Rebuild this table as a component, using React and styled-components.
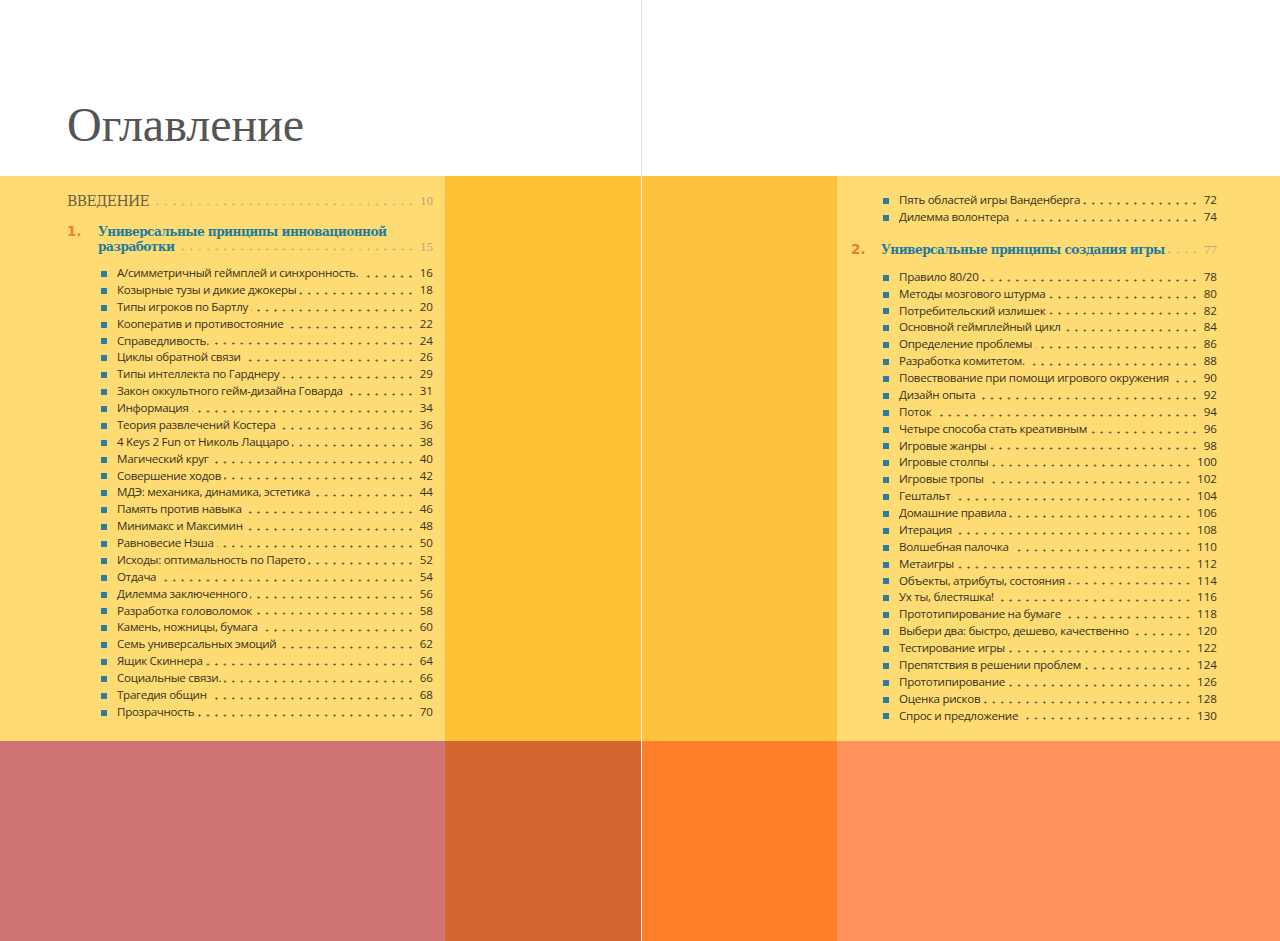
import React from 'react';
import styled, { createGlobalStyle } from 'styled-components';

const GlobalStyle = createGlobalStyle`
  html, body {
    margin: 0;
    padding: 0;
    background: #ffffff;
    overflow: hidden;
  }
  * { box-sizing: border-box; }
`;

const LIGHT = '#FFDB74';

const leftItems = [
  ['А/симметричный геймплей и синхронность.', '16'],
  ['Козырные тузы и дикие джокеры', '18'],
  ['Типы игроков по Бартлу', '20'],
  ['Кооператив и противостояние', '22'],
  ['Справедливость.', '24'],
  ['Циклы обратной связи', '26'],
  ['Типы интеллекта по Гарднеру', '29'],
  ['Закон оккультного гейм-дизайна Говарда', '31'],
  ['Информация', '34'],
  ['Теория развлечений Костера', '36'],
  ['4 Keys 2 Fun от Николь Лаццаро', '38'],
  ['Магический круг', '40'],
  ['Совершение ходов', '42'],
  ['МДЭ: механика, динамика, эстетика', '44'],
  ['Память против навыка', '46'],
  ['Минимакс и Максимин', '48'],
  ['Равновесие Нэша', '50'],
  ['Исходы: оптимальность по Парето', '52'],
  ['Отдача', '54'],
  ['Дилемма заключенного', '56'],
  ['Разработка головоломок', '58'],
  ['Камень, ножницы, бумага', '60'],
  ['Семь универсальных эмоций', '62'],
  ['Ящик Скиннера', '64'],
  ['Социальные связи.', '66'],
  ['Трагедия общин', '68'],
  ['Прозрачность', '70'],
];

const rightTop = [
  ['Пять областей игры Ванденберга', '72'],
  ['Дилемма волонтера', '74'],
];

const rightItems = [
  ['Правило 80/20', '78'],
  ['Методы мозгового штурма', '80'],
  ['Потребительский излишек', '82'],
  ['Основной геймплейный цикл', '84'],
  ['Определение проблемы', '86'],
  ['Разработка комитетом.', '88'],
  ['Повествование при помощи игрового окружения', '90'],
  ['Дизайн опыта', '92'],
  ['Поток', '94'],
  ['Четыре способа стать креативным', '96'],
  ['Игровые жанры', '98'],
  ['Игровые столпы', '100'],
  ['Игровые тропы', '102'],
  ['Гештальт', '104'],
  ['Домашние правила', '106'],
  ['Итерация', '108'],
  ['Волшебная палочка', '110'],
  ['Метаигры', '112'],
  ['Объекты, атрибуты, состояния', '114'],
  ['Ух ты, блестяшка!', '116'],
  ['Прототипирование на бумаге', '118'],
  ['Выбери два: быстро, дешево, качественно', '120'],
  ['Тестирование игры', '122'],
  ['Препятствия в решении проблем', '124'],
  ['Прототипирование', '126'],
  ['Оценка рисков', '128'],
  ['Спрос и предложение', '130'],
];

const Spread = styled.div`
  display: grid;
  grid-template-columns: 641px 1px 638px;
  width: 1280px;
  height: 941px;
  background: #ffffff;
`;

const Divider = styled.div`
  background: linear-gradient(#dedede 0 176px, rgba(255, 255, 255, 0.55) 176px);
`;

const Page = styled.div`
  display: grid;
  grid-template-rows: 176px 565px 200px;
  grid-template-columns: ${(p) => p.$cols};
`;

const Header = styled.div`
  grid-column: 1 / -1;
  padding: 101px 0 0 67px;
`;

const PageTitle = styled.h1`
  margin: 0;
  font-family: 'Liberation Serif', serif;
  font-weight: 400;
  font-size: 48px;
  line-height: 1;
  color: #555555;
`;

const Block = styled.div`
  background: ${(p) => p.$bg};
`;

const Contents = styled.div`
  background: ${LIGHT};
  padding: ${(p) => p.$pad};
  display: flex;
  flex-direction: column;
`;

const Row = styled.div`
  display: flex;
  align-items: flex-end;
`;

const Leader = styled.div`
  flex: 1;
  min-width: 0;
  background-image: radial-gradient(circle, ${(p) => p.$dot} 0 0.85px, transparent 1.3px);
  background-size: 8.45px 3px;
  background-repeat: repeat-x;
  background-position: right 2px bottom ${(p) => p.$dotY}px;
`;

const Label = styled.span`
  background: ${LIGHT};
  padding-right: 3px;
`;

const PageNum = styled.span`
  flex: none;
  margin-left: 3px;
  color: ${(p) => p.$color};
`;

const Intro = styled(Row)`
  font-family: 'DejaVu Serif', serif;
  font-size: 14px;
  line-height: 20px;
  color: #6e5f45;
  letter-spacing: -0.6px;
`;

const IntroNum = styled(PageNum)`
  font-family: 'Liberation Serif', serif;
  font-size: 13px;
  letter-spacing: 0;
  font-weight: 400;
`;

const Section = styled.div`
  display: flex;
  margin-top: ${(p) => p.$top}px;
`;

const SectionNum = styled.div`
  flex: none;
  width: ${(p) => p.$w}px;
  font-family: 'DejaVu Sans', sans-serif;
  font-weight: 700;
  font-size: 13.5px;
  line-height: 15px;
  color: #F47A2C;
`;

const SectionTitle = styled(Row)`
  flex: 1;
  font-family: 'DejaVu Serif Condensed', 'DejaVu Serif', serif;
  font-stretch: condensed;
  font-weight: 700;
  font-size: 13.5px;
  line-height: 15px;
  letter-spacing: -0.55px;
  color: #1E7C9C;
`;

const List = styled.ul`
  list-style: none;
  margin: ${(p) => p.$top}px 0 0;
  padding: 0 0 0 ${(p) => p.$indent}px;
`;

const Item = styled.li`
  display: flex;
  align-items: flex-end;
  height: 16.88px;
  font-family: 'Open Sans', sans-serif;
  font-size: 11.6px;
  line-height: 16.88px;
  letter-spacing: -0.3px;
  color: #37321f;
`;

const Bullet = styled.span`
  flex: none;
  width: 6px;
  height: 6px;
  margin: 0 10px 5px 0;
  background: #2D7B9F;
`;

const ItemNum = styled(PageNum)`
  letter-spacing: 0;
`;

const Entries = ({ items, top, indent }) => (
  <List $top={top} $indent={indent}>
    {items.map(([title, page]) => (
      <Item key={title}>
        <Bullet />
        <Leader $dot="#5f573f" $dotY={4}>
          <Label>{title}</Label>
        </Leader>
        <ItemNum $color="#37321f">{page}</ItemNum>
      </Item>
    ))}
  </List>
);

const Heading = ({ num, title, page, top, numW }) => (
  <Section $top={top}>
    <SectionNum $w={numW}>{num}</SectionNum>
    <SectionTitle>
      <Leader $dot="#c9b479" $dotY={3}>
        <Label>{title}</Label>
      </Leader>
      <IntroNum $color="#bba97c">{page}</IntroNum>
    </SectionTitle>
  </Section>
);

const App = () => (
  <>
    <GlobalStyle />
    <Spread>
      <Page $cols="445px 196px">
        <Header>
          <PageTitle>Оглавление</PageTitle>
        </Header>
        <Contents $pad="15px 12px 0 67px">
          <Intro>
            <Leader $dot="#cdb77c" $dotY={5}>
              <Label>ВВЕДЕНИЕ</Label>
            </Leader>
            <IntroNum $color="#bba97c">10</IntroNum>
          </Intro>
          <Heading
            num="1."
            title="Универсальные принципы инновационной разработки"
            page="15"
            top={13}
            numW={31}
          />
          <Entries items={leftItems} top={11} indent={34} />
        </Contents>
        <Block $bg="#FEC136" />
        <Block $bg="#CF7472" />
        <Block $bg="#D4672F" />
      </Page>
      <Divider />
      <Page $cols="195px 443px">
        <Header />
        <Block $bg="#FEC23C" />
        <Contents $pad="16px 63px 0 14px">
          <Entries items={rightTop} top={0} indent={32} />
          <Heading
            num="2."
            title="Универсальные принципы создания игры"
            page="77"
            top={16}
            numW={30}
          />
          <Entries items={rightItems} top={12} indent={32} />
        </Contents>
        <Block $bg="#FF7F2B" />
        <Block $bg="#FF915D" />
      </Page>
    </Spread>
  </>
);

export default App;
